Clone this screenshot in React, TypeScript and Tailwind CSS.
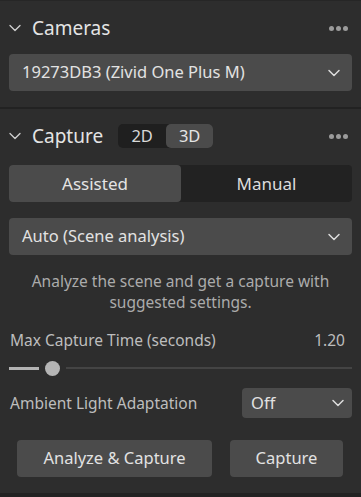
import React from 'react';
import { ChevronDown } from 'lucide-react';

const Dots = () => (
    <div className="flex gap-[2px] mr-[4px]">
        <span className="w-[5px] h-[5px] rounded-full bg-[#9b9b9b]" />
        <span className="w-[5px] h-[5px] rounded-full bg-[#9b9b9b]" />
        <span className="w-[5px] h-[5px] rounded-full bg-[#9b9b9b]" />
    </div>
);

const Select = ({ label, className }: { label: string; className: string }) => (
    <div className={`flex items-center justify-between rounded-[4px] bg-[#4b4b4b] ${className}`}>
        <span className="text-[16.5px] text-[#e2e2e2]">{label}</span>
        <ChevronDown size={20} strokeWidth={1.8} className="text-[#dddddd]" />
    </div>
);

export default function App() {
    return (
        <div className="w-[361px] h-[497px] bg-[#2d2d2d] border-t border-[#262626] font-['Noto_Sans',sans-serif] text-[#dedede] flex flex-col">
            <section className="px-[9px] pb-[16px] border-b-2 border-[#222222]">
                <div className="flex items-center justify-between h-[36px] mt-[9px]">
                    <div className="flex items-center gap-[7px]">
                        <ChevronDown size={20} strokeWidth={1.6} className="text-[#cfcfcf] ml-[-4px]" />
                        <h2 className="text-[19px] leading-none text-[#e4e4e4]">Cameras</h2>
                    </div>
                    <Dots />
                </div>
                <Select label="19273DB3 (Zivid One Plus M)" className="h-[37px] mt-[8px] pl-[13px] pr-[8px]" />
            </section>

            <section className="px-[9px] flex flex-col">
                <div className="flex items-center justify-between h-[36px] mt-[9px]">
                    <div className="flex items-center gap-[7px]">
                        <ChevronDown size={20} strokeWidth={1.6} className="text-[#cfcfcf] ml-[-4px]" />
                        <h2 className="text-[19px] leading-none text-[#e4e4e4]">Capture</h2>
                        <div className="flex ml-[8px] h-[24px] rounded-[5px] bg-[#1f1f1f] text-[16.5px]">
                            <span className="w-[48px] flex items-center justify-center text-[#d8d8d8]">2D</span>
                            <span className="w-[47px] flex items-center justify-center rounded-[5px] bg-[#4b4b4b] text-[#e4e4e4]">3D</span>
                        </div>
                    </div>
                    <Dots />
                </div>

                <div className="flex h-[37px] mt-[11px] rounded-[4px] bg-[#222222] text-[17px]">
                    <span className="w-[172px] flex items-center justify-center rounded-[4px] bg-[#4b4b4b] text-[#e4e4e4]">Assisted</span>
                    <span className="flex-1 flex items-center justify-center text-[#dcdcdc]">Manual</span>
                </div>

                <Select label="Auto (Scene analysis)" className="h-[37px] mt-[16px] pl-[13px] pr-[8px]" />

                <p className="mt-[16px] text-center text-[15.5px] leading-[21px] text-[#ababab] px-[10px]">
                    Analyze the scene and get a capture with suggested settings.
                </p>

                <div className="flex justify-between items-center mt-[16px] text-[15.5px] text-[#bdbdbd] pl-[1px] pr-[7px]">
                    <span>Max Capture Time (seconds)</span>
                    <span>1.20</span>
                </div>

                <div className="flex items-center h-[16px] mt-[8px]">
                    <div className="w-[30px] h-[3px] bg-[#b3b3b3]" />
                    <div className="w-[15px] h-[15px] rounded-full bg-[#b5b5b5] ml-[6px]" />
                    <div className="flex-1 h-[2px] bg-[#444444] ml-[6px]" />
                </div>

                <div className="flex justify-between items-center mt-[12px] text-[15.5px] text-[#bdbdbd] pl-[1px]">
                    <span>Ambient Light Adaptation</span>
                    <Select label="Off" className="w-[110px] h-[30px] pl-[9px] pr-[4px]" />
                </div>

                <div className="flex gap-[18px] mt-[22px] px-[8px] text-[16.5px]">
                    <button className="w-[195px] h-[37px] rounded-[4px] bg-[#4b4b4b] text-[#e2e2e2]">Analyze &amp; Capture</button>
                    <button className="w-[113px] h-[37px] rounded-[4px] bg-[#4b4b4b] text-[#e2e2e2]">Capture</button>
                </div>
            </section>
            <div className="flex-1" />
            <div className="h-[4px] bg-[#222222]" />
        </div>
    );
}
